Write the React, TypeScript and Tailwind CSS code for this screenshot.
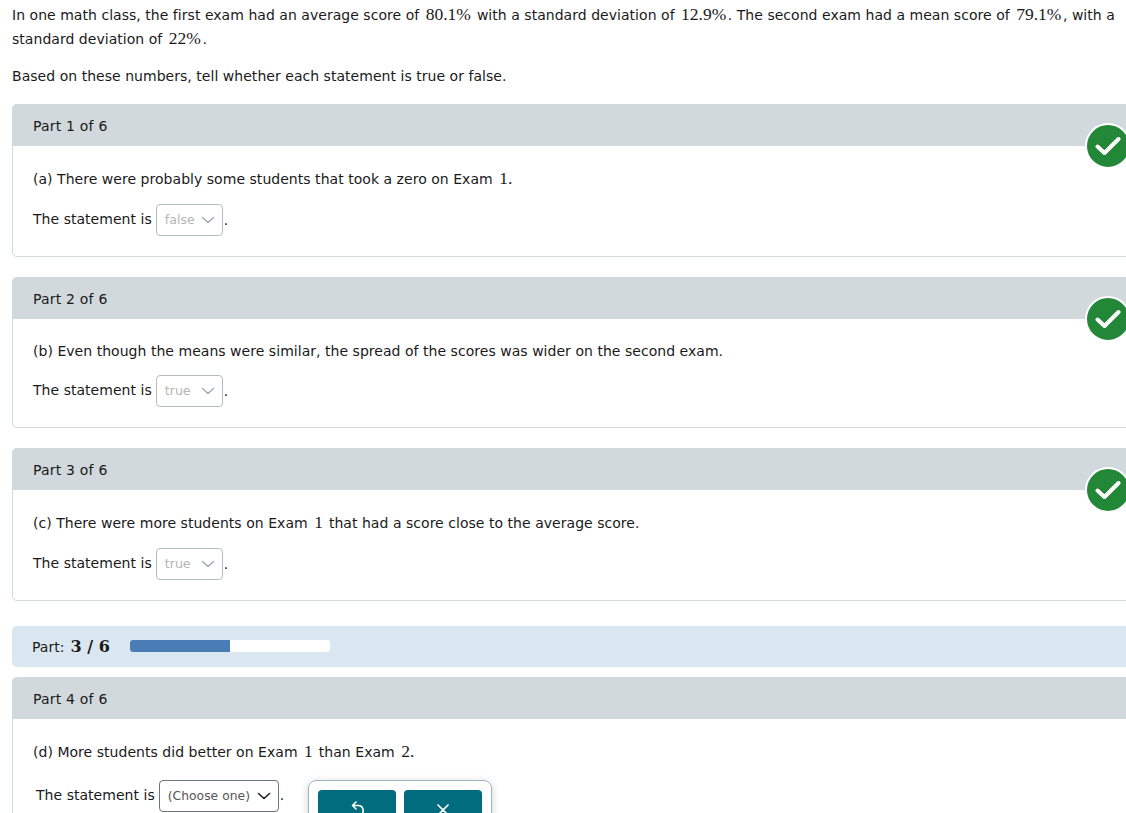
import React from 'react';

const M = ({ children }: { children: React.ReactNode }) => (
  <span className="font-['Liberation_Serif',serif] text-[17.5px] leading-none tracking-normal ml-[2px] mr-[1.5px]">{children}</span>
);

const Chevron = ({ className }: { className: string }) => (
  <svg viewBox="0 0 14 8" className={className} fill="none" stroke="currentColor" strokeWidth="1.6" strokeLinecap="round" strokeLinejoin="round">
    <path d="M1.5 1.5 7 6.5l5.5-5" />
  </svg>
);

const Check = () => (
  <div className="absolute left-[1073px] top-[19px] w-[46px] h-[46px] rounded-full bg-[#238738] border-2 border-white flex items-center justify-center">
    <svg viewBox="0 0 26 20" className="w-[26px] h-[20px]" fill="none" stroke="white" strokeWidth="4" strokeLinecap="round" strokeLinejoin="round">
      <path d="M2.5 10.5 9.5 17 23.5 3" />
    </svg>
  </div>
);

const Part = ({ n, children, answer, bodyClass, rowClass }: { n: number; children: React.ReactNode; answer: string; bodyClass: string; rowClass: string }) => (
  <section className="w-[1130px] rounded-[5px] border border-[#d0d9de]">
    <div className="h-[42px] -mt-px -mx-px bg-[#d1d9dc] rounded-t-[5px] flex items-center pl-[21px] pt-[2px] tracking-[0.2px]">Part {n} of 6</div>
    <div className={`pl-5 pb-5 ${bodyClass}`}>
      <p className="leading-[20px]">{children}</p>
      <div className={`flex items-center ${rowClass}`}>
        <span className="-mt-[2px]">The statement is</span>
        <span className="ml-[4px] h-[32px] w-[67px] rounded-[4px] border border-[#b4bcbc] flex items-center justify-between pl-2 pr-[7px] text-[12.5px] text-[#b5b5b5]">
          {answer}
          <Chevron className="w-[14px] h-[8px] text-[#a3adb3]" />
        </span>
        <span className="ml-px">.</span>
      </div>
    </div>
  </section>
);

export default function App() {
  return (
    <div className="relative h-[813px] w-[1126px] overflow-hidden bg-white pl-3 pt-[3px] font-['DejaVu_Sans',sans-serif] text-[14px] tracking-[0.035px] text-[#1a1a1a]">
      <p className="leading-[24px]">
        In one math class, the first exam had an average score of <M>80.1%</M> with a standard deviation of <M>12.9%</M>. The second exam had a mean score of <M>79.1%</M>, with a standard deviation of <M>22%</M>.
      </p>
      <p className="mt-[13px] leading-[24px]">Based on these numbers, tell whether each statement is true or false.</p>

      <div className="mt-[16px] relative">
        <Part n={1} answer="false" bodyClass="pt-[23px]" rowClass="mt-[15px]">
          (a) There were probably some students that took a zero on Exam <M>1.</M>
        </Part>
        <Check />
      </div>

      <div className="mt-5 relative">
        <Part n={2} answer="true" bodyClass="pt-[22px]" rowClass="mt-[14px]">
          (b) Even though the means were similar, the spread of the scores was wider on the second exam.
        </Part>
        <Check />
      </div>

      <div className="mt-5 relative">
        <Part n={3} answer="true" bodyClass="pt-[23px]" rowClass="mt-[15px]">
          (c) There were more students on Exam <M>1</M> that had a score close to the average score.
        </Part>
        <Check />
      </div>

      <div className="mt-[25px] h-[41px] w-[1130px] rounded-[5px] bg-[#dae6f0] flex items-center pl-5">
        <span className="mt-[1px]">Part:</span>
        <span className="ml-[6px] mt-[1px] font-['DejaVu_Serif',serif] font-bold text-[16px]">3 / 6</span>
        <div className="ml-5 -mt-px h-3 w-[200px] rounded-[3px] bg-white overflow-hidden">
          <div className="h-full w-1/2 bg-[#4a7db6]" />
        </div>
      </div>

      <section className="mt-[10px] w-[1130px] rounded-t-[5px] border-x border-[#d0d9de] h-[200px]">
        <div className="h-[42px] -mx-px bg-[#d1d9dc] rounded-t-[5px] flex items-center pl-[21px] pt-[2px] tracking-[0.2px]">Part 4 of 6</div>
        <p className="pl-5 pt-[23px] leading-[20px]">(d) More students did better on Exam <M>1</M> than Exam <M>2.</M></p>
        <div className="flex items-start pl-[23px] mt-[18px]">
          <span className="mt-[5px]">The statement is</span>
          <span className="ml-[4px] h-[32px] w-[120px] rounded-[4px] border border-[#6b7778] flex items-center justify-between pl-2 pr-[7px] text-[12.3px] text-[#555]">
            (Choose one)
            <Chevron className="w-[14px] h-[8px] text-[#222]" />
          </span>
          <span className="ml-px mt-[5px]">.</span>
          <div className="ml-[24px] flex gap-2 rounded-[8px] border border-[#9fb6bd] p-[9px] shadow-[0_2px_8px_rgba(0,0,0,0.18)]">
            <button className="w-[78px] h-[40px] rounded-[4px] bg-[#006c7d] text-white flex justify-center pt-[11px]">
              <svg viewBox="0 0 16 16" className="w-4 h-4" fill="none" stroke="currentColor" strokeWidth="1.6" strokeLinecap="round" strokeLinejoin="round">
                <path d="M7 1 3.5 4.5 7 8M3.5 4.5H9a5 5 0 0 1 1.5 9.8" />
              </svg>
            </button>
            <button className="w-[78px] h-[40px] rounded-[4px] bg-[#006c7d] text-white flex justify-center pt-[13px]">
              <svg viewBox="0 0 14 14" className="w-[14px] h-[14px]" fill="none" stroke="currentColor" strokeWidth="1.7" strokeLinecap="round">
                <path d="M2 2l10 10M12 2 2 12" />
              </svg>
            </button>
          </div>
        </div>
      </section>
    </div>
  );
}
